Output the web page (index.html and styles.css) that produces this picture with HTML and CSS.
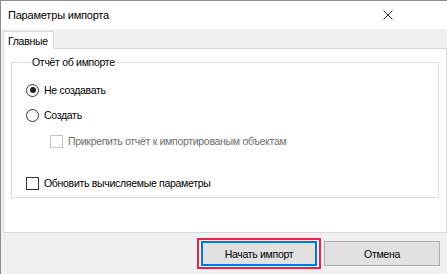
FILE: index.html
```html
<!DOCTYPE html>
<html lang="ru">
<head>
    <meta charset="UTF-8">
    <title>Параметры импорта</title>
    <link rel="stylesheet" href="styles.css">
</head>
<body>
    <div class="window">
        <div class="titlebar">
            <span class="title">Параметры импорта</span>
            <svg class="close" width="10" height="10" viewBox="0 0 10 10">
                <path d="M0.5 0.5 L9.5 9.5 M9.5 0.5 L0.5 9.5" stroke="#333" stroke-width="1" fill="none"/>
            </svg>
        </div>
        <div class="dialog-body">
            <div class="tabs">
                <div class="tab active">Главные</div>
            </div>
            <div class="tab-page">
                <fieldset class="group">
                    <legend>Отчёт об импорте</legend>
                    <div class="option option-radio">
                        <span class="radio checked"></span>
                        <span>Не создавать</span>
                    </div>
                    <div class="option option-radio">
                        <span class="radio"></span>
                        <span>Создать</span>
                    </div>
                    <div class="option option-sub disabled">
                        <span class="checkbox"></span>
                        <span>Прикрепить отчёт к импортированым объектам</span>
                    </div>
                    <div class="option option-check">
                        <span class="checkbox"></span>
                        <span>Обновить вычисляемые параметры</span>
                    </div>
                </fieldset>
            </div>
            <div class="footer">
                <div class="highlight">
                    <button class="btn btn-default">Начать импорт</button>
                </div>
                <button class="btn">Отмена</button>
            </div>
        </div>
    </div>
</body>
</html>
```

FILE: styles.css
```css
:root {
    --color-border: #d9d9d9;
    --color-panel: #f0f0f0;
    --color-text: #000;
}
html, body { margin: 0; height: 100%; background-color: #fff; overflow: hidden; }
body { font-family: 'Liberation Sans', sans-serif; font-size: 10.5px; letter-spacing: -0.3px; color: var(--color-text); }

.window { height: 100%; border-left: 1px solid #8c8c8c; border-top: 1px solid #8c8c8c; box-sizing: border-box; display: flex; flex-direction: column; }
.titlebar { height: 28px; display: flex; align-items: center; justify-content: space-between; padding: 0 54px 0 7px; background-color: #fff; }
.title { font-size: 11px; letter-spacing: -0.2px; }
.close { display: block; }

.dialog-body { flex: 1; background-color: var(--color-panel); display: flex; flex-direction: column; padding: 0 0 0 2px; }
.tabs { display: flex; height: 20px; padding-top: 2px; box-sizing: border-box; }
.tab { background-color: #fff; border: 1px solid var(--color-border); border-bottom: none; padding: 0 5px 0 4px; line-height: 18px; position: relative; z-index: 1; }

.tab-page { background-color: #fff; border: 1px solid var(--color-border); height: 185px; box-sizing: border-box; padding: 6px 7px 0 7px; margin-top: -1px; }

/* Group box */
.group { margin: 0; border: 1px solid #dcdcdc; padding: 13px 0 10px 14px; height: 143px; box-sizing: border-box; }
.group legend { padding: 0 1px; margin-left: 5px; line-height: 14px; }
.option { display: flex; align-items: center; gap: 5px; height: 16px; }
.option-radio + .option-radio { margin-top: 9px; }
.option-sub { margin: 10px 0 0 24px; }
.option-check { margin-top: 26px; }
.disabled { color: #6d6d6d; }

.radio { width: 11px; height: 11px; border: 1px solid #333; border-radius: 50%; display: inline-flex; align-items: center; justify-content: center; }
.radio.checked::after { content: ''; width: 6px; height: 6px; border-radius: 50%; background-color: #222; }
.checkbox { width: 11px; height: 11px; border: 1px solid #333; background-color: #fff; }
.disabled .checkbox { border-color: #c4c4c4; }

/* Кнопки */
.footer { flex: 1; display: flex; justify-content: flex-end; align-items: center; gap: 3px; padding-right: 7px; }
.highlight { border: 2px solid #e8214a; padding: 1px 2px; }
.btn { font-family: inherit; font-size: 10.5px; letter-spacing: -0.3px; color: var(--color-text); background-color: #e1e1e1; border: 1px solid #adadad; width: 116px; height: 25px; margin: 0; padding: 0; }
.btn-default { border: 2px solid #0078d7; }
```
